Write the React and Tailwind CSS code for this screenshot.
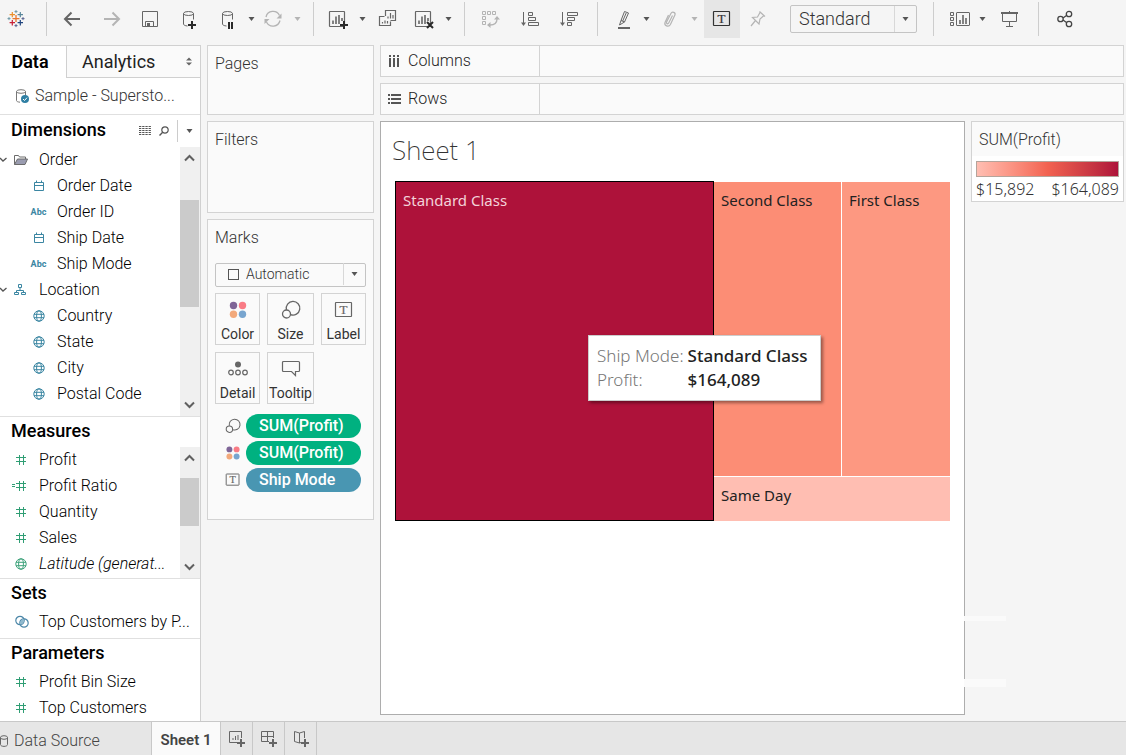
import React from "react";

/* ---------- small shared icons ---------- */

const Icon = ({ size = 20, className = "", children }) => (
  <svg
    width={size}
    height={size}
    viewBox={`0 0 ${size} ${size}`}
    fill="none"
    stroke="currentColor"
    className={`block shrink-0 ${className}`}
    aria-hidden="true"
  >
    {children}
  </svg>
);

const Caret = () => (
  <svg width="7" height="4" viewBox="0 0 7 4" className="block shrink-0" aria-hidden="true">
    <path d="M0.5 0h6L3.5 4z" fill="currentColor" />
  </svg>
);

const Plus = ({ x, y }) => (
  <path d={`M${x - 4} ${y}h8M${x} ${y - 4}v8`} stroke="#2a2a2a" strokeWidth="2" />
);

const Cylinder = () => (
  <>
    <ellipse cx="8.5" cy="4.5" rx="5" ry="2" />
    <path d="M3.5 4.5v10.5c0 1 1.5 1.8 4 2M13.5 4.5v6" />
  </>
);

const TextBoxIcon = ({ size = 20 }) => (
  <svg width={size} height={size} viewBox="0 0 20 20" className="block shrink-0" aria-hidden="true">
    <rect x="1.5" y="2.5" width="16" height="14" rx="0.5" fill="none" stroke="currentColor" strokeWidth="1.2" />
    <text
      x="9.5"
      y="14"
      textAnchor="middle"
      fontSize="13"
      fill="currentColor"
      stroke="currentColor"
      strokeWidth="0.2"
      fontFamily="Liberation Serif, serif"
    >
      T
    </text>
  </svg>
);

const SizeIcon = ({ size = 20 }) => (
  <svg width={size} height={size} viewBox="0 0 20 20" fill="none" stroke="#666" strokeWidth="1.3" className="block shrink-0" aria-hidden="true">
    <path d="M5.4 9.8A6.8 6.8 0 1 1 9.6 14.6" />
    <circle cx="5.5" cy="14" r="4" />
  </svg>
);

const ColorIcon = ({ size = 20 }) => (
  <svg width={size} height={size} viewBox="0 0 20 20" className="block shrink-0" aria-hidden="true">
    <circle cx="5.5" cy="5.5" r="3.7" fill="#7f6597" />
    <circle cx="14.5" cy="5.5" r="3.7" fill="#f97b85" />
    <circle cx="5.5" cy="14.3" r="3.7" fill="#f2a97c" />
    <circle cx="14.5" cy="14.3" r="3.7" fill="#78a5cf" />
  </svg>
);

const DetailIcon = () => (
  <Icon className="text-[#666]">
    <circle cx="10" cy="5.5" r="3" fill="#666" stroke="none" />
    <circle cx="3" cy="13.5" r="2.3" strokeWidth="1.2" />
    <circle cx="10" cy="13.5" r="2.3" strokeWidth="1.2" />
    <circle cx="17" cy="13.5" r="2.3" strokeWidth="1.2" />
  </Icon>
);

const TooltipIcon = () => (
  <Icon className="text-[#666]">
    <path d="M2.5 2.5h15a1 1 0 0 1 1 1v8a1 1 0 0 1-1 1h-3v4l-4-4h-8a1 1 0 0 1-1-1v-8a1 1 0 0 1 1-1z" strokeWidth="1.2" />
  </Icon>
);

const Logo = () => {
  const crosses = [
    [10, 9.6, 3.5, "#e8762d", 1.3],
    [6.3, 5.6, 2.7, "#eb912c", 1.2],
    [14.3, 5.6, 2.7, "#59879b", 1.2],
    [6.3, 13.7, 2.7, "#c72037", 1.2],
    [14.3, 13.7, 2.7, "#1f447e", 1.2],
    [10, 2.6, 1.5, "#7199a6", 1],
    [10, 16.6, 1.5, "#5b6591", 1],
    [3, 9.6, 1.5, "#7199a6", 1],
    [17, 9.6, 1.5, "#5b6591", 1],
  ];
  return (
    <Icon>
      {crosses.map(([x, y, r, color, w], i) => (
        <path key={i} d={`M${x - r} ${y}h${2 * r}M${x} ${y - r}v${2 * r}`} stroke={color} strokeWidth={w} />
      ))}
    </Icon>
  );
};

/* ---------- field icons ---------- */

const CalendarIcon = () => (
  <Icon size={12} className="text-[#3b86a2]">
    <path d="M1.5 2.5h9v8h-9zM1.5 5.5h9M3.5 0.5v2M8.5 0.5v2" />
  </Icon>
);

const AbcIcon = () => (
  <span className="text-[9px] leading-3 font-bold text-[#3b86a2]" aria-hidden="true">
    Abc
  </span>
);

const GlobeIcon = () => (
  <Icon size={12}>
    <circle cx="6" cy="6" r="5.2" />
    <ellipse cx="6" cy="6" rx="2.4" ry="5.2" />
    <path d="M1 4.3h10M1 7.7h10" />
  </Icon>
);

const HashIcon = () => (
  <Icon size={12}>
    <path d="M4.5 1v10M8.5 1v10M1 3.5h10M1 7.5h10" stroke="#2f9e74" />
  </Icon>
);

const CalcHashIcon = () => (
  <svg width="16" height="12" viewBox="0 0 16 12" fill="none" stroke="#2f9e74" className="block shrink-0" aria-hidden="true">
    <path d="M8.5 1v10M12.5 1v10M5 3.5h10M5 7.5h10M1 4.5h3M1 6.5h3" />
  </svg>
);

const FolderIcon = () => (
  <Icon size={14} className="text-[#6b6b6b]">
    <path d="M0.5 11.5v-9h4l1 1.5h6v2" />
    <path d="M0.5 11.5l3-5.5h10l-2.5 5.5z" fill="#9a9cb0" />
  </Icon>
);

const HierarchyIcon = () => (
  <Icon size={12} className="text-[#3b86a2]">
    <path d="M4.5 0.5h3v3h-3zM0.5 8.5h4v2h-4zM7.5 8.5h4v2h-4zM6 3.5v3M2.5 8.5v-2h7v2" />
  </Icon>
);

const SetIcon = () => (
  <Icon size={14} className="text-[#4c87a8]">
    <circle cx="5" cy="5.5" r="4.2" strokeWidth="1.2" />
    <circle cx="9" cy="8" r="4.2" strokeWidth="1.2" />
    <ellipse cx="7" cy="6.8" rx="1.6" ry="3" fill="#8fb9ce" stroke="none" transform="rotate(32 7 6.8)" />
  </Icon>
);

/* ---------- toolbar ---------- */

const ToolButton = ({ label, dim, className = "", children }) => (
  <button
    type="button"
    aria-label={label}
    className={`flex w-5 h-9 shrink-0 items-center justify-center ${dim ? "text-[#b4b4b4]" : "text-[#666]"} ${className}`}
  >
    {children}
  </button>
);

const MenuButton = ({ label, dim, className = "" }) => (
  <button
    type="button"
    aria-label={label}
    className={`flex w-2 h-9 shrink-0 items-center justify-center ${dim ? "text-[#b4b4b4]" : "text-[#555]"} ${className}`}
  >
    <Caret />
  </button>
);

const Separator = ({ className }) => (
  <div className={`w-px h-[34px] shrink-0 bg-[#cdcdcd] ${className}`} />
);

const ChartBars = () => (
  <>
    <rect x="1.5" y="2.5" width="15" height="15" rx="0.5" strokeWidth="1.2" />
    <path d="M5 15v-3.5M8 15V7.5M11 15V6M14 12V9" strokeWidth="1.6" />
  </>
);

const Toolbar = () => (
  <header className="flex h-[45px] items-start pl-1.5 overflow-hidden">
    <div className="flex h-[38px] items-center">
      <ToolButton label="Start page">
        <Logo />
      </ToolButton>
      <Separator className="ml-5" />

      <div className="ml-4 flex gap-[19px]">
        <ToolButton label="Undo">
          <Icon><path d="M17 10H2M8.500 3.500L2 10l6.500 6.500" strokeWidth="2" /></Icon>
        </ToolButton>
        <ToolButton label="Redo" dim>
          <Icon><path d="M2 10h15M10.500 3.500L17 10l-6.500 6.500" strokeWidth="2" /></Icon>
        </ToolButton>
        <ToolButton label="Save">
          <Icon>
            <path d="M1.500 2.500h15v15h-15zM4.500 17.500v-5h8v5" />
            <path d="M6 14h3v4H6z" fill="currentColor" stroke="none" />
          </Icon>
        </ToolButton>
        <ToolButton label="New data source">
          <Icon><Cylinder /><Plus x={12} y={16} /></Icon>
        </ToolButton>
        <ToolButton label="Pause auto updates">
          <Icon>
            <Cylinder />
            <path d="M10 13v7M13 13v7" stroke="#2a2a2a" strokeWidth="2" />
          </Icon>
        </ToolButton>
      </div>
      <MenuButton label="Auto update options" className="ml-2" />
      <ToolButton label="Run update" dim className="ml-2">
        <Icon>
          <path d="M3 8a7.200 7.200 0 0 1 13.500-1.500M17 11.500a7.200 7.200 0 0 1-13.500 1.500" strokeWidth="1.300" />
          <path d="M18.500 4.500v5h-5zM1.500 15v-5h5z" fill="currentColor" stroke="none" />
        </Icon>
      </ToolButton>
      <MenuButton label="Run update options" dim className="ml-2.5" />
      <Separator className="ml-3" />

      <ToolButton label="New worksheet" className="ml-3.5">
        <Icon><ChartBars /><Plus x={16} y={16} /></Icon>
      </ToolButton>
      <MenuButton label="New worksheet options" className="ml-2.5" />
      <ToolButton label="Duplicate" className="ml-3">
        <Icon>
          <path d="M7.500 7V1.500h10v10H12.500M6.500 7.500h-5v9h11v-4" strokeWidth="1.200" />
          <path d="M10 9.500V7.500M12.500 9.500V4M15 9.500V6M4.500 14.500V13M7 14.500V11.500M9.500 14.500V12" strokeWidth="1.200" />
        </Icon>
      </ToolButton>
      <ToolButton label="Clear sheet" className="ml-4">
        <Icon>
          <ChartBars />
          <path d="M13 13l6 6M19 13l-6 6" stroke="#2a2a2a" strokeWidth="2" />
        </Icon>
      </ToolButton>
      <MenuButton label="Clear sheet options" className="ml-2.5" />
      <Separator className="ml-3" />

      <div className="ml-4 flex gap-[19px]">
        <ToolButton label="Swap rows and columns" dim>
          <Icon>
            <path d="M1.500 2.500h3v3h-3zM6.500 2.500h3v3h-3zM11.500 2.500h3v3h-3zM1.500 7.500h3v3h-3zM1.500 12.500h3v3h-3z" />
            <path d="M16 10c0 4-3 6-7 6" strokeWidth="1.300" />
            <path d="M13 10.500h6L16 7zM9.500 13v6L6 16z" fill="currentColor" stroke="none" />
          </Icon>
        </ToolButton>
        <ToolButton label="Sort ascending">
          <Icon>
            <path d="M3.500 3v12" />
            <path d="M1 13.500h5l-2.500 3.500z" fill="currentColor" stroke="none" />
            <path d="M8.500 3.500h4v3h-4zM8.500 8.500h7v3h-7zM8.500 13.500h10v3h-10z" />
          </Icon>
        </ToolButton>
        <ToolButton label="Sort descending">
          <Icon>
            <path d="M3.500 3v12" />
            <path d="M1 13.500h5l-2.500 3.500z" fill="currentColor" stroke="none" />
            <path d="M8.500 3.500h10v3h-10zM8.500 8.500h7v3h-7zM8.500 13.500h4v3h-4z" />
          </Icon>
        </ToolButton>
      </div>
      <Separator className="ml-4.5" />

      <ToolButton label="Highlight" className="ml-4">
        <Icon>
          <path d="M10.500 2.500l4 1.500-4 9-3.500-1.500zM7 11.500L5.500 16l5-3M8.700 12l3.500-8" />
          <path d="M4 19h12" strokeWidth="2" />
        </Icon>
      </ToolButton>
      <MenuButton label="Highlight options" className="ml-2" />
      <ToolButton label="Group members" dim className="ml-2.5">
        <Icon>
          <path d="M12.500 6.500l-3.800 7.500c-.8 1.500-2.800.5-2.100-1l4.300-8.500c1.300-2.500 5-1 4 1.600l-4.500 9.400c-1.700 3.300-6.700 1.200-5.300-2.300L8.500 6" strokeWidth="1.200" />
        </Icon>
      </ToolButton>
      <MenuButton label="Group options" dim className="ml-2.5" />
      <button
        type="button"
        aria-label="Show mark labels"
        aria-pressed="true"
        className="ml-1.5 flex h-[38px] w-9 items-center justify-center bg-[#e6e6e6] text-[#333]"
      >
        <TextBoxIcon />
      </button>
      <ToolButton label="Fix axes" dim className="ml-2">
        <Icon>
          <path d="M11.500 2.500l5.500 5M12 3.500l-2.500 4.500-5 .5 6.500 6.500 1-5 4-3.500M7.500 11.500L3 17" strokeWidth="1.200" />
        </Icon>
      </ToolButton>

      <div className="relative ml-5.5 h-7 w-[127px]">
        <select
          aria-label="Fit"
          className="h-7 w-full appearance-none rounded-xs border border-[#c4c4c4] bg-[#f5f5f5] pl-2 text-[18px] leading-6 font-light text-[#333]"
        >
          <option>Standard</option>
          <option>Fit Width</option>
          <option>Entire View</option>
        </select>
        <div className="pointer-events-none absolute inset-y-px right-px flex w-[22px] items-center justify-center border-l border-[#d8d8d8] text-[#555]">
          <Caret />
        </div>
      </div>
      <Separator className="ml-4" />

      <ToolButton label="Show/hide cards" className="ml-4">
        <Icon>
          <path d="M0.500 3.500h3v3h-3zM0.500 8.500h3v3h-3zM0.500 13.500h3v3h-3z" />
          <rect x="6.500" y="3.500" width="13" height="13" rx="0.500" />
          <path d="M10 15v-4M13 15V6M16 15V9" strokeWidth="1.600" />
        </Icon>
      </ToolButton>
      <MenuButton label="Card options" className="ml-2" />
      <ToolButton label="Presentation mode" className="ml-3.5">
        <Icon>
          <path d="M1 4h17" strokeWidth="2" />
          <path d="M2.500 4.500v8h14v-8M9.500 2v1M9.500 12.500v5M6 17.500h7" />
        </Icon>
      </ToolButton>
      <Separator className="ml-4.5" />
      <ToolButton label="Share" className="ml-4">
        <Icon className="text-[#444]">
          <circle cx="14" cy="5" r="2.700" strokeWidth="1.300" />
          <circle cx="5.500" cy="10" r="2.700" strokeWidth="1.300" />
          <circle cx="14" cy="15" r="2.700" strokeWidth="1.300" />
          <path d="M8 9l3.500-2.500M8 11l3.500 2.500" strokeWidth="1.300" />
        </Icon>
      </ToolButton>
    </div>
  </header>
);

/* ---------- data pane ---------- */

const dimensions = [
  { name: "Order", icon: <FolderIcon />, parent: true },
  { name: "Order Date", icon: <CalendarIcon /> },
  { name: "Order ID", icon: <AbcIcon /> },
  { name: "Ship Date", icon: <CalendarIcon /> },
  { name: "Ship Mode", icon: <AbcIcon /> },
  { name: "Location", icon: <HierarchyIcon />, parent: true },
  { name: "Country", icon: <GlobeIcon /> },
  { name: "State", icon: <GlobeIcon /> },
  { name: "City", icon: <GlobeIcon /> },
  { name: "Postal Code", icon: <GlobeIcon /> },
];

const measures = [
  { name: "Profit", icon: <HashIcon /> },
  { name: "Profit Ratio", icon: <CalcHashIcon />, wide: true },
  { name: "Quantity", icon: <HashIcon /> },
  { name: "Sales", icon: <HashIcon /> },
  { name: "Latitude (generat...", icon: <GlobeIcon />, italic: true },
];

const Field = ({ icon, italic, wide, children }) => (
  <li className="flex h-[26px] items-center text-[16px] font-light text-black">
    <span className={`flex w-[39px] shrink-0 items-center text-[#3fa37c] ${wide ? "pl-[11px]" : "pl-[15px]"}`}>
      {icon}
    </span>
    <span className={`whitespace-nowrap ${italic ? "italic" : ""}`}>{children}</span>
  </li>
);

const ScrollArrow = ({ down }) => (
  <svg width="11" height="8" viewBox="0 0 11 8" className="block" aria-hidden="true">
    <path d={down ? "M1 1.500l4.500 4.500L10 1.500" : "M1 6.500L5.500 2 10 6.500"} fill="none" stroke="#606060" strokeWidth="2" />
  </svg>
);

const ScrollBar = ({ thumb }) => (
  <div className="flex w-5 shrink-0 flex-col bg-[#f0f0f0] pr-px">
    <button type="button" aria-label="Scroll up" className="flex h-[22px] items-center justify-center">
      <ScrollArrow />
    </button>
    <div className="flex-1">
      <div className={`bg-[#cbcbcb] ${thumb}`} />
    </div>
    <button type="button" aria-label="Scroll down" className="flex h-[22px] items-center justify-center">
      <ScrollArrow down />
    </button>
  </div>
);

const SectionTitle = ({ children }) => (
  <h2 className="h-[30px] pl-[11px] text-[18px] leading-7 font-medium text-black">{children}</h2>
);

const DataPane = () => (
  <aside className="flex w-[201px] shrink-0 flex-col border-t border-r border-[#d0d0d0] bg-white">
    <div className="flex h-8">
      <button type="button" className="w-[66px] pb-0.5 pl-0.5 pr-2 text-[18px] font-semibold text-black">
        Data
      </button>
      <button
        type="button"
        className="flex flex-1 items-center justify-between border-b border-l border-[#d0d0d0] bg-[#fafafa] pl-[15px] pr-2 text-[18px] text-[#222]"
      >
        Analytics
        <svg width="6" height="9" viewBox="0 0 6 9" className="block" aria-hidden="true">
          <path d="M0 3.500h6L3 0.500zM0 5.500h6L3 8.500z" fill="#666" />
        </svg>
      </button>
    </div>

    <button type="button" className="flex h-9 items-center gap-1.5 pl-[15px] text-left text-[16px] font-light text-[#333]">
      <Icon size={14} className="text-[#777]">
        <ellipse cx="6" cy="2.500" rx="4.500" ry="1.800" />
        <path d="M1.500 2.500v9c0 1 1.500 1.500 3.500 1.700M10.500 2.500v4" />
        <circle cx="10" cy="10" r="4" fill="#2f7fa3" stroke="none" />
        <path d="M8 10l1.500 1.500L12 8.700" stroke="#fff" />
      </Icon>
      Sample - Supersto...
    </button>

    <section className="border-t border-[#e0e0e0]">
      <div className="flex h-8 items-center">
        <SectionTitle>Dimensions</SectionTitle>
        <div className="ml-auto flex items-center text-[#555]">
          <button type="button" aria-label="View data">
            <Icon size={12}>
              <path d="M0 1.500h12M0 3.500h12M0 5.500h12M0 7.500h12M0 9.500h12" strokeDasharray="2.300 0.900" />
            </Icon>
          </button>
          <button type="button" aria-label="Find field" className="ml-2">
            <Icon size={10}>
              <circle cx="6" cy="4" r="3.200" strokeWidth="1.200" />
              <path d="M3.700 6.300L0.500 9.500" strokeWidth="1.400" />
            </Icon>
          </button>
          <div className="ml-2 h-[22px] w-px bg-[#ccc]" />
          <button type="button" aria-label="Dimension options" className="flex h-[22px] w-[22px] items-center justify-center">
            <Caret />
          </button>
        </div>
      </div>
      <div className="flex h-[269px]">
        <ul className="flex-1">
          {dimensions.map(({ name, icon, parent }) =>
            parent ? (
              <li key={name} className="flex h-[26px] items-center text-[16px] font-light text-black">
                <svg width="7" height="6" viewBox="0 0 7 6" className="mr-[7px] block" aria-hidden="true">
                  <path d="M0 1l3 3 3.500-3" fill="none" stroke="#555" strokeWidth="1.300" />
                </svg>
                <span className="w-[25px] shrink-0">{icon}</span>
                {name}
              </li>
            ) : (
              <li key={name} className="flex h-[26px] items-center text-[16px] font-light text-black">
                <span className="flex w-[57px] shrink-0 justify-center pl-5 text-[#3b86a2]">{icon}</span>
                {name}
              </li>
            )
          )}
        </ul>
        <ScrollBar thumb="mt-[31px] h-[107px]" />
      </div>
    </section>

    <section className="border-t border-[#e0e0e0]">
      <SectionTitle>Measures</SectionTitle>
      <div className="flex h-[131px]">
        <ul className="min-w-0 flex-1">
          {measures.map(({ name, icon, italic, wide }) => (
            <Field key={name} icon={icon} italic={italic} wide={wide}>
              {name}
            </Field>
          ))}
        </ul>
        <ScrollBar thumb="mt-[9px] h-12" />
      </div>
    </section>

    <section className="border-t border-[#e0e0e0] pb-[3px]">
      <SectionTitle>Sets</SectionTitle>
      <ul>
        <Field icon={<SetIcon />}>Top Customers by P...</Field>
      </ul>
    </section>

    <section className="border-t border-[#e0e0e0]">
      <SectionTitle>Parameters</SectionTitle>
      <ul>
        <Field icon={<HashIcon />}>Profit Bin Size</Field>
        <Field icon={<HashIcon />}>Top Customers</Field>
      </ul>
    </section>
  </aside>
);

/* ---------- cards ---------- */

const Card = ({ title, className = "", children }) => (
  <section className={`border border-[#d3d3d3] bg-[#fafafa] px-[7px] pt-1.5 ${className}`}>
    <h2 className="text-[16px] leading-6 font-light text-[#333]">{title}</h2>
    {children}
  </section>
);

const markButtons = [
  { label: "Color", icon: <ColorIcon /> },
  { label: "Size", icon: <SizeIcon /> },
  { label: "Label", icon: <TextBoxIcon /> },
  { label: "Detail", icon: <DetailIcon /> },
  { label: "Tooltip", icon: <TooltipIcon /> },
];

const Pill = ({ icon, color, children }) => (
  <li className="flex items-center">
    <span className="flex w-[31px] justify-center pl-1 text-[#666]">{icon}</span>
    <button
      type="button"
      className={`h-6 w-[115px] rounded-full pl-[13px] text-left text-[16px] font-medium text-white ${color}`}
    >
      {children}
    </button>
  </li>
);

const MarksCard = () => (
  <Card title="Marks" className="h-[301px]">
    <div className="relative mt-3 h-6">
      <select
        aria-label="Mark type"
        className="h-6 w-full appearance-none rounded-xs border border-[#c4c4c4] bg-[#fafafa] pl-[30px] text-[14px] font-light text-[#333]"
      >
        <option>Automatic</option>
        <option>Bar</option>
        <option>Line</option>
        <option>Square</option>
      </select>
      <div className="pointer-events-none absolute left-[13px] top-[7px] h-[11px] w-[11px] border border-[#555]" />
      <div className="pointer-events-none absolute inset-y-px right-px flex w-[22px] items-center justify-center border-l border-[#d8d8d8] text-[#555]">
        <Caret />
      </div>
    </div>

    <div className="mt-[7px] grid grid-cols-[45px_47px_45px] gap-[7px]">
      {markButtons.map(({ label, icon }) => (
        <button
          key={label}
          type="button"
          className="flex h-[52px] flex-col items-center justify-between border border-[#d3d3d3] pt-1.5 text-[14px] leading-5 text-[#333]"
        >
          <span className="text-[#666]">{icon}</span>
          {label}
        </button>
      ))}
    </div>

    <ul className="mt-2.5 flex flex-col gap-[3px]">
      <Pill icon={<SizeIcon size={16} />} color="bg-[#00b180]">SUM(Profit)</Pill>
      <Pill icon={<ColorIcon size={16} />} color="bg-[#00b180]">SUM(Profit)</Pill>
      <Pill icon={<TextBoxIcon size={16} />} color="bg-[#4996b2]">Ship Mode</Pill>
    </ul>
  </Card>
);

/* ---------- worksheet ---------- */

const Shelf = ({ icon, children }) => (
  <div className="flex h-8 border border-[#d3d3d3] bg-[#fafafa]">
    <div className="flex w-[159px] items-center gap-[7px] border-r border-[#d3d3d3] pl-[7px] text-[16px] font-light text-[#222]">
      {icon}
      {children}
    </div>
  </div>
);

const Treemap = () => (
  <div className="relative flex h-[340px] font-['Noto_Sans'] text-[15px] leading-5 text-[#222]">
    <div className="w-[319px] border border-black bg-[#ae123a] pt-2 pl-[7px] text-[#f3d3d9]">
      Standard Class
    </div>
    <div className="flex flex-1 flex-col gap-px pt-px">
      <div className="flex flex-1 gap-px">
        <div className="w-[127px] bg-[#fc8d75] pt-2 pl-[7px]">Second Class</div>
        <div className="flex-1 bg-[#fd9881] pt-2 pl-[7px]">First Class</div>
      </div>
      <div className="h-11 bg-[#ffbeb2] pt-2 pl-[7px]">Same Day</div>
    </div>

    {/* Hover tooltip */}
    <div
      role="tooltip"
      className="absolute top-[154px] left-[193px] grid grid-cols-[auto_auto] gap-x-1 border border-[#ccc] bg-white px-2 py-2 pr-3 text-[17px] leading-6 shadow-[2px_2px_3px_rgba(0,0,0,0.4)]"
    >
      <span className="font-light text-[#777]">Ship Mode:</span>
      <span className="font-medium text-[#222]">Standard Class</span>
      <span className="font-light text-[#777]">Profit:</span>
      <span className="font-medium text-[#222]">$164,089</span>
    </div>
  </div>
);

const Legend = () => (
  <section className="w-[153px] shrink-0 self-start border border-[#d3d3d3] bg-white font-['Noto_Sans'] text-[#333]">
    <h2 className="bg-[#fafafa] pt-1.5 pb-1 pl-[7px] font-['Roboto'] text-[16px] leading-6 font-light">
      SUM(Profit)
    </h2>
    <div className="mx-1 mt-[5px] h-4 border border-[#b5a49b] bg-linear-to-r from-[#ffbeb2] via-[#f26250] to-[#ae123a]" />
    <div className="mx-1 flex justify-between text-[16px] leading-6 font-light">
      <span>$15,892</span>
      <span>$164,089</span>
    </div>
  </section>
);

const Workspace = () => (
  <main className="flex min-w-0 flex-1 gap-1.5 pr-0.5 pb-1.5 pl-1.5">
    <div className="flex w-[167px] shrink-0 flex-col gap-1.5">
      <Card title="Pages" className="h-[70px]" />
      <Card title="Filters" className="h-[92px]" />
      <MarksCard />
    </div>

    <div className="flex min-w-0 flex-1 flex-col gap-1.5">
      <Shelf
        icon={
          <Icon size={13} className="text-[#555]">
            <path d="M2 0v2M6 0v2M10 0v2M2 3v9M6 3v9M10 3v9" strokeWidth="2" />
          </Icon>
        }
      >
        Columns
      </Shelf>
      <Shelf
        icon={
          <Icon size={13} className="text-[#555]">
            <path d="M0 2h2M0 6h2M0 10h2M3 2h10M3 6h10M3 10h10" strokeWidth="2" />
          </Icon>
        }
      >
        Rows
      </Shelf>
      <div className="flex flex-1 gap-1.5">
        <section className="relative min-w-0 flex-1 border border-[#adadad] bg-white">
          <h1 className="pt-2.5 pl-[11px] font-['Noto_Sans'] text-[26px] leading-9 font-extralight text-[#333]">
            Sheet 1
          </h1>
          <div className="mt-[13px] px-3.5">
            <Treemap />
          </div>

          <div className="absolute top-[494px] left-full h-[5px] w-[42px] bg-[#fafafa]" />
          <div className="absolute top-[557px] left-full h-2 w-[42px] bg-[#fafafa]" />
        </section>
        <Legend />
      </div>
    </div>
  </main>
);

/* ---------- bottom tabs ---------- */

const TabButton = ({ label, children }) => (
  <button
    type="button"
    aria-label={label}
    className="flex w-8 items-center justify-center border-r border-[#c8c8c8] text-[#666]"
  >
    {children}
  </button>
);

const TabPlus = () => <path d="M9 13h8M13 9v8" strokeWidth="2" />;

const SheetTabs = () => (
  <footer className="flex h-[34px] border-t border-[#c8c8c8] bg-[#e6e6e6]">
    <button type="button" className="flex w-[151px] items-center gap-1.5 pt-1 text-[16px] font-light text-[#444]">
      <svg width="8" height="12" viewBox="0 0 8 12" fill="none" stroke="#666" className="block" aria-hidden="true">
        <ellipse cx="4" cy="2.500" rx="3.500" ry="1.800" />
        <path d="M0.500 2.500v7c0 2.500 7 2.500 7 0v-7" />
      </svg>
      Data Source
    </button>
    <button type="button" className="w-[70px] border-x border-[#c8c8c8] bg-[#fafafa] pt-1 text-[15px] font-semibold text-[#444]">
      Sheet 1
    </button>
    <TabButton label="New worksheet">
      <Icon size={17}>
        <path d="M9 12.500H1.500v-11h12V8" />
        <path d="M5 10V8M7.500 10V6M10 10V5" />
        <TabPlus />
      </Icon>
    </TabButton>
    <TabButton label="New dashboard">
      <Icon size={17}>
        <path d="M9 11.500H1.500v-10h12V8M1.500 6.500h12M7.500 1.500v10" />
        <TabPlus />
      </Icon>
    </TabButton>
    <TabButton label="New story">
      <Icon size={17}>
        <path d="M9 12.500L7.500 13l-5-1.500v-10L7.500 3l5-1.500V8M7.500 3v10" />
        <TabPlus />
      </Icon>
    </TabButton>
  </footer>
);

const App = () => (
  <div className="flex min-h-screen flex-col bg-[#f5f5f5] font-['Roboto',sans-serif]">
    <Toolbar />
    <div className="flex flex-1">
      <DataPane />
      <Workspace />
    </div>
    <SheetTabs />
  </div>
);

export default App;
